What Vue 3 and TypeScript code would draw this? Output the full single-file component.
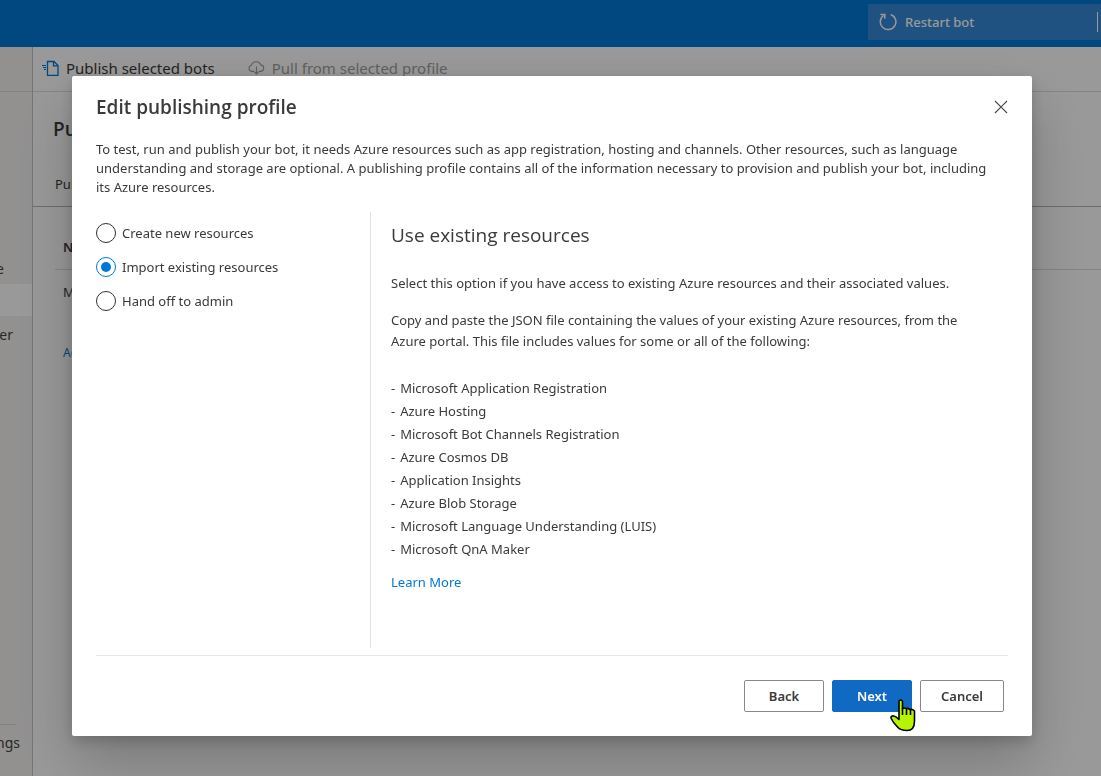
<script setup lang="ts">
import { ref } from 'vue'

interface Option {
  id: string
  label: string
}

const options: Option[] = [
  { id: 'create', label: 'Create new resources' },
  { id: 'import', label: 'Import existing resources' },
  { id: 'handoff', label: 'Hand off to admin' },
]

const selected = ref<string>('import')

const resources: string[] = [
  'Microsoft Application Registration',
  'Azure Hosting',
  'Microsoft Bot Channels Registration',
  'Azure Cosmos DB',
  'Application Insights',
  'Azure Blob Storage',
  'Microsoft Language Understanding (LUIS)',
  'Microsoft QnA Maker',
]
</script>

<template>
  <div class="page">
    <header class="topbar">
      <div class="restart">
        <button type="button" class="restart-btn">
          <svg class="restart-icon" width="18" height="18" viewBox="0 0 18 18" fill="none" stroke="currentColor" stroke-width="1.5">
            <path d="M11.8 1.5a7.8 7.8 0 1 1-7.3 1" />
            <path d="M1.5 1.5h4.3v4.3" />
          </svg>
          <span>Restart bot</span>
        </button>
        <span class="restart-divider"></span>
      </div>
    </header>

    <div class="body">
      <nav class="sidebar">
        <div class="side-top"></div>
        <a href="#" class="side-item side-first">e</a>
        <a href="#" class="side-item side-active" aria-label="Publish"></a>
        <a href="#" class="side-item side-er">er</a>
        <div class="side-bottom">
          <a href="#" class="side-item side-settings">ngs</a>
        </div>
      </nav>

      <main class="main">
        <div class="toolbar">
          <button type="button" class="tool">
            <svg width="17" height="16" viewBox="0 0 17 16" fill="none" stroke="#0078d4" stroke-width="1.3">
              <path d="M5.5 1.5h6.5l4 4v9.800H5.5z" />
              <path d="M11.5 1.5v4.300h4.300" />
              <path d="M0 5.5h4M1 7.5h3M2 9.5h2" stroke-width="1" />
            </svg>
            <span>Publish selected bots</span>
          </button>
          <button type="button" class="tool tool-disabled" disabled>
            <svg width="17" height="14" viewBox="0 0 17 14" fill="none" stroke="currentColor" stroke-width="1.1">
              <path d="M6 10.4H3.8a3.1 3.1 0 0 1-.4-6.1A5 5 0 0 1 12.8 3.9a3.3 3.3 0 0 1 .3 6.5H11" />
              <path d="M8.5 5.4v7.4M6.2 10.6l2.3 2.3 2.3-2.3" />
            </svg>
            <span>Pull from selected profile</span>
          </button>
        </div>
        <div class="heading">
          <h1>Publish</h1>
          <span class="tab">Publish</span>
        </div>
        <div class="profiles">
          <div class="profile-head">Name</div>
          <div class="profile-row">My</div>
          <a href="#" class="add-link">Add new</a>
        </div>
      </main>
    </div>

    <div class="overlay">
      <section class="dialog" role="dialog" aria-modal="true" aria-labelledby="dialog-title">
        <div class="dialog-head">
          <h2 id="dialog-title">Edit publishing profile</h2>
          <button type="button" class="close" aria-label="Close">
            <svg width="14" height="14" viewBox="0 0 14 14" fill="none" stroke="#444" stroke-width="1.1">
              <path d="M1 1l12 12M13 1L1 13" />
            </svg>
          </button>
        </div>
        <p class="intro">
          To test, run and publish your bot, it needs Azure resources such as app registration, hosting and channels. Other resources, such as language understanding and storage are optional. A publishing profile contains all of the information necessary to provision and publish your bot, including its Azure resources.
        </p>

        <div class="columns">
          <div class="choices" role="radiogroup" aria-labelledby="dialog-title">
            <label v-for="o in options" :key="o.id" class="choice" :for="o.id">
              <input :id="o.id" v-model="selected" type="radio" name="resource" :value="o.id" />
              <span>{{ o.label }}</span>
            </label>
          </div>
          <div class="details">
            <h3>Use existing resources</h3>
            <p>Select this option if you have access to existing Azure resources and their associated values.</p>
            <p class="copy">Copy and paste the JSON file containing the values of your existing Azure resources, from the Azure portal. This file includes values for some or all of the following:</p>
            <ul>
              <li v-for="r in resources" :key="r"><span>-</span><span>{{ r }}</span></li>
            </ul>
            <a href="#" class="learn">Learn More</a>
          </div>
        </div>

        <div class="actions">
          <button type="button" class="btn">Back</button>
          <button type="button" class="btn primary">
            Next
            <svg class="cursor" width="26" height="33" viewBox="0 0 26 33" fill="#b5f500" stroke="#000" stroke-width="1.6" stroke-linejoin="round">
              <path d="M9 20.5V2.5Q9 1 10.5 1T12.5 2.5V9.5Q14 8.5 16.2 9.5Q18 9 20 10.5Q22.5 9.8 24.5 12V22Q24.5 31.5 17 31.5Q10.5 31.5 7.5 28Q3 23.5 1.2 19.5Q.5 17 3 16.7Q6 17 9 20.5Z" />
              <path fill="none" d="M12.5 9v7M16.5 9.5v6.5M20.5 10.5v5.5" />
            </svg>
          </button>
          <button type="button" class="btn wide">Cancel</button>
        </div>
      </section>
    </div>
  </div>
</template>

<style>
body {
  margin: 0;
}
</style>

<style scoped>
.page {
  display: flex;
  flex-direction: column;
  height: 100vh;
  overflow: hidden;
  background: #fff;
  color: #3b3a39;
  font-family: 'Segoe UI', 'Noto Sans', 'Open Sans', sans-serif;
  font-size: 13px;
}

h1,
h2,
h3 {
  font-family: 'Segoe UI', 'Open Sans', 'Noto Sans', sans-serif;
}

button {
  font-family: inherit;
  border: 0;
  background: none;
  padding: 0;
  color: inherit;
}

a {
  color: #0078d4;
  text-decoration: none;
}

.topbar {
  display: flex;
  flex: none;
  justify-content: flex-end;
  align-items: flex-start;
  height: 47px;
  background: #0078d4;
}

.restart {
  display: flex;
  align-items: center;
  justify-content: space-between;
  width: 233px;
  height: 36px;
  margin-top: 4px;
  background: #3489d6;
  color: #fff;
}

.restart-btn {
  display: flex;
  align-items: center;
  gap: 8px;
  padding-left: 11px;
  font-size: 13px;
  font-weight: 500;
}

.restart-divider {
  width: 1px;
  height: 20px;
  margin-right: 3px;
  background: #fff;
}

.body {
  display: flex;
  flex: 1;
  min-height: 0;
}

.sidebar {
  display: flex;
  flex: none;
  flex-direction: column;
  box-sizing: border-box;
  width: 33px;
  overflow: hidden;
  background: #f3f2f1;
  border-right: 1px solid #c4c4c4;
}

.side-top {
  flex: none;
  height: 44px;
  border-bottom: 1px solid #ddd;
}

.side-item {
  display: flex;
  flex: none;
  align-items: center;
  justify-content: flex-end;
  box-sizing: border-box;
  height: 32px;
  padding-right: 19px;
  font-size: 14px;
  color: #444;
}

.side-first {
  margin-top: 160px;
  padding-right: 28px;
}

.side-active {
  background: #fff;
}

.side-er {
  margin-top: 2px;
}

.side-bottom {
  margin-top: auto;
  margin-bottom: 16px;
}

.side-bottom::before {
  display: block;
  width: 16px;
  height: 1px;
  background: #d8d8d8;
  content: '';
}

.side-settings {
  height: 35px;
  padding-right: 12px;
}

.main {
  flex: 1;
  min-width: 0;
}

.toolbar {
  display: flex;
  align-items: center;
  gap: 33px;
  box-sizing: border-box;
  height: 45px;
  padding: 0 0 2px 9px;
  border-bottom: 1px solid #ddd;
}

.tool {
  display: flex;
  align-items: center;
  gap: 7px;
  font-size: 15px;
}

.tool-disabled {
  color: #a19f9d;
}

.heading {
  display: flex;
  flex-direction: column;
  justify-content: space-between;
  box-sizing: border-box;
  height: 115px;
  padding: 23px 20px 0;
  border-bottom: 1px solid #b5b5b5;
}

.heading h1 {
  margin: 0;
  font-size: 19px;
  line-height: 28px;
  font-weight: 600;
}

.tab {
  padding: 0 2px 12px;
  line-height: 20px;
}

.profiles {
  padding: 20px 0 20px 22px;
}

.profile-head {
  height: 42px;
  padding-left: 8px;
  border-bottom: 1px solid #ddd;
  line-height: 40px;
  font-weight: 600;
}

.profile-row {
  padding: 12px 8px;
  line-height: 20px;
}

.add-link {
  display: block;
  margin-top: 30px;
  padding-left: 8px;
  font-size: 12px;
}

.overlay {
  position: fixed;
  inset: 0;
  display: flex;
  align-items: flex-start;
  padding: 76px 69px 40px 72px;
  background: rgba(0, 0, 0, 0.4);
}

.dialog {
  flex: 1;
  padding: 16px 24px 24px;
  border-radius: 2px;
  background: #fff;
  box-shadow: 0 26px 58px rgba(0, 0, 0, 0.22), 0 5px 14px rgba(0, 0, 0, 0.18);
}

.dialog-head {
  display: flex;
  align-items: center;
  justify-content: space-between;
}

.dialog-head h2 {
  margin: 0;
  font-size: 19px;
  line-height: 30px;
  font-weight: 600;
}

.close {
  display: flex;
}

.intro {
  margin: 18px 0 15px;
  padding-right: 12px;
  line-height: 19px;
}

.columns {
  display: flex;
  min-height: 436px;
}

.choices {
  display: flex;
  flex: none;
  flex-direction: column;
  gap: 14px;
  box-sizing: border-box;
  width: 275px;
  padding-top: 11px;
  border-right: 1px solid #e1e1e1;
}

.choice {
  display: flex;
  align-items: center;
  gap: 6px;
  height: 20px;
}

.choice input {
  display: grid;
  place-items: center;
  box-sizing: border-box;
  width: 20px;
  height: 20px;
  margin: 0;
  border: 1px solid #323130;
  border-radius: 50%;
  appearance: none;
}

.choice input:checked {
  border-color: #0078d4;
}

.choice input:checked::before {
  width: 10px;
  height: 10px;
  border-radius: 50%;
  background: #0078d4;
  content: '';
}

.details {
  flex: 1;
  padding: 8px 0 0 20px;
}

.details h3 {
  margin: 0 0 23px;
  font-size: 19px;
  line-height: 30px;
  font-weight: 400;
}

.details p {
  margin: 0 0 16px;
  line-height: 21px;
}

.details .copy {
  max-width: 600px;
  margin-bottom: 25px;
}

ul {
  margin: 0 0 10px;
  padding: 0;
  list-style: none;
}

li {
  display: flex;
  gap: 5px;
  line-height: 23px;
}

.learn {
  line-height: 23px;
}

.actions {
  display: flex;
  justify-content: flex-end;
  gap: 8px;
  padding: 24px 4px 0 0;
  margin-top: 7px;
  border-top: 1px solid #e5e5e5;
}

.btn {
  position: relative;
  box-sizing: border-box;
  width: 80px;
  height: 32px;
  border: 1px solid #8a8886;
  border-radius: 2px;
  background: #fff;
  font-size: 13px;
  font-weight: 600;
}

.wide {
  width: 84px;
}

.primary {
  z-index: 1;
  border-color: #106ac4;
  background: #106ac4;
  color: #fff;
}

.cursor {
  position: absolute;
  top: 18px;
  left: 57px;
}
</style>
